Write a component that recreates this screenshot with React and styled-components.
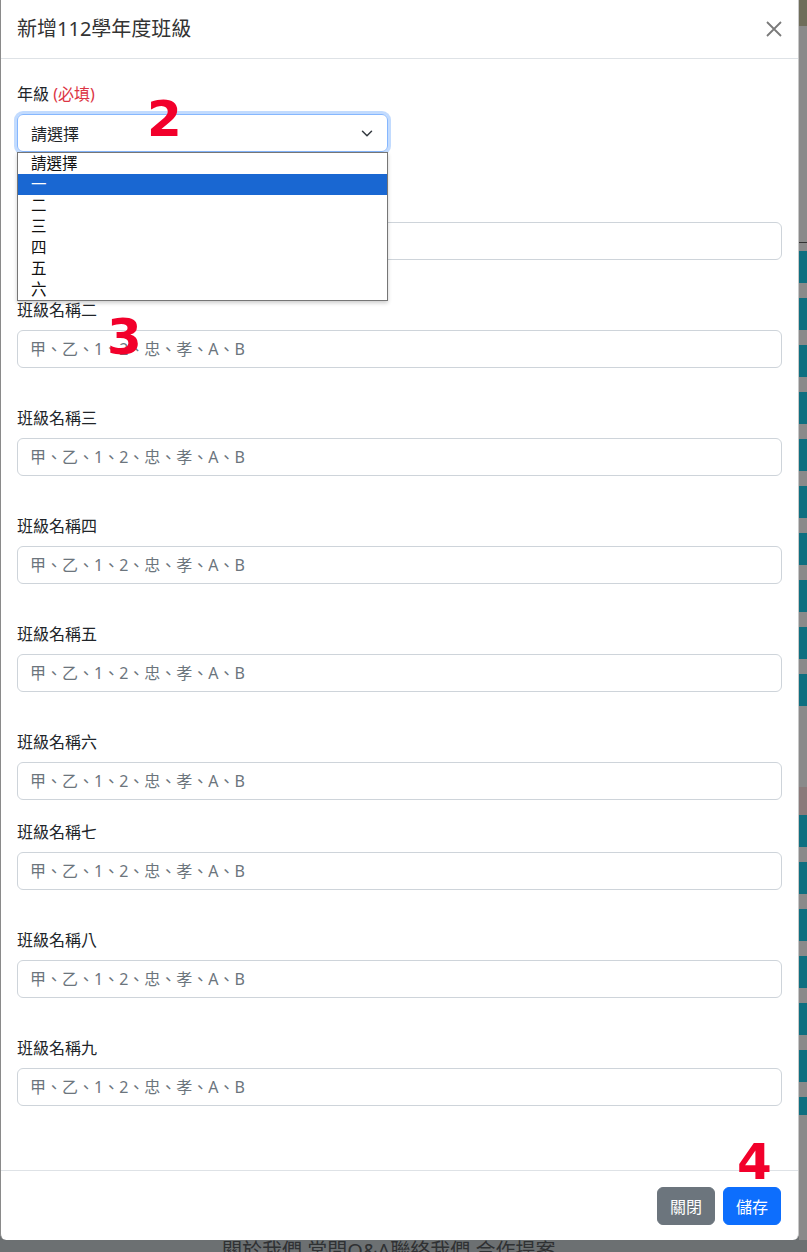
import React from 'react'
import styled, { createGlobalStyle } from 'styled-components'

const GlobalStyle = createGlobalStyle`
  body {
    margin: 0;
    background: #6c7072;
    font-family: "Noto Sans", "Noto Sans CJK TC", sans-serif;
  }
`

const Page = styled.div`
  width: 807px;
  height: 1252px;
  display: flex;
  flex-direction: column;
  overflow: hidden;
`

const TopRow = styled.div`
  display: flex;
  height: 1240px;
`

const Modal = styled.div`
  position: relative;
  width: 799px;
  box-sizing: border-box;
  background: #fff;
  border-left: 1px solid #8a8a8a;
  border-right: 1px solid #c8c8c8;
  border-radius: 0 0 6px 6px;
  display: flex;
  flex-direction: column;
  color: #212529;
`

const Header = styled.div`
  height: 59px;
  box-sizing: border-box;
  border-bottom: 1px solid #dee2e6;
  padding: 0 16px;
  display: flex;
  align-items: center;
  justify-content: space-between;
`

const Title = styled.h5`
  margin: 0;
  font-size: 20px;
  font-weight: 400;
  line-height: 30px;
  color: #333;
`

const CloseButton = styled.button`
  width: 16px;
  height: 16px;
  padding: 0;
  border: 0;
  background: none;
  display: flex;
  cursor: pointer;
`

const Body = styled.div`
  flex: 1;
  padding: 23px 16px 0;
`

const Group = styled.div`
  position: relative;
  margin-bottom: ${p => p.$gap ?? 38}px;
`

const Label = styled.label`
  display: block;
  font-size: 16px;
  line-height: 24px;
  margin-bottom: 8px;
`

const Required = styled.span`
  color: #dc3545;
`

const SelectBox = styled.div`
  width: 371px;
  height: 38px;
  box-sizing: border-box;
  border: 1px solid #86b7fe;
  border-radius: 6px;
  box-shadow: 0 0 0 3px rgba(13, 110, 253, 0.25);
  padding: 0 14px 0 13px;
  display: flex;
  align-items: center;
  justify-content: space-between;
  font-size: 16px;
`

const OptionList = styled.ul`
  position: absolute;
  top: 70px;
  left: 0;
  width: 371px;
  box-sizing: border-box;
  margin: 0;
  padding: 0;
  list-style: none;
  background: #fff;
  border: 1px solid #767676;
  box-shadow: 0 2px 4px rgba(0, 0, 0, 0.2);
  z-index: 5;
`

const Option = styled.li`
  height: 21px;
  line-height: 21px;
  padding-left: 13px;
  font-size: 15.5px;
  color: ${p => (p.$active ? '#fff' : '#111')};
  background: ${p => (p.$active ? '#1967d2' : 'transparent')};
`

const Input = styled.input`
  display: block;
  width: 100%;
  height: 38px;
  box-sizing: border-box;
  border: 1px solid #ced4da;
  border-radius: 6px;
  padding: 0 12px;
  font-family: inherit;
  font-size: 16px;
  color: #212529;
  &::placeholder {
    color: #6c757d;
  }
`

const Footer = styled.div`
  border-top: 1px solid #dee2e6;
  padding: 16px 17px 15px;
  display: flex;
  justify-content: flex-end;
  gap: 8px;
`

const Button = styled.button`
  height: 38px;
  padding: 0 12px;
  border: 1px solid ${p => p.$bg};
  border-radius: 6px;
  background: ${p => p.$bg};
  color: #fff;
  font-family: inherit;
  font-size: 16px;
`

const Mark = styled.span`
  position: absolute;
  left: ${p => p.$x}px;
  top: ${p => p.$y}px;
  font-family: "DejaVu Sans", sans-serif;
  font-weight: 700;
  font-size: 50px;
  line-height: 1;
  color: #f2002b;
  z-index: 6;
`

const Strip = styled.div`
  flex: 1;
  display: flex;
  flex-direction: column;
`

const StripPart = styled.div`
  height: ${p => p.$h}px;
  background: ${p =>
    p.$teal
      ? 'repeating-linear-gradient(to bottom, #0e6f80 0 32px, #8a8a8a 32px 47px)'
      : p.$c || '#8a8a8a'};
  border-bottom: ${p => (p.$line ? '1px solid #333' : '0')};
`

const SiteFooter = styled.div`
  height: 12px;
  overflow: hidden;
  padding-left: 222px;
  font-size: 20px;
  line-height: 20px;
  color: #2f3133;
  white-space: nowrap;
  & span {
    display: block;
    margin-top: 1px;
  }
`

const placeholder = '甲、乙、1、2、忠、孝、A、B'
const grades = ['請選擇', '一', '二', '三', '四', '五', '六']
const names = ['一', '二', '三', '四', '五', '六', '七', '八', '九']

const App = () => {
  return (
    <Page>
      <GlobalStyle />
      <TopRow>
        <Modal>
          <Header>
            <Title>新增112學年度班級</Title>
            <CloseButton aria-label="close">
              <svg width="16" height="16" viewBox="0 0 16 16">
                <path d="M1 1 15 15M15 1 1 15" stroke="#7a7a7a" strokeWidth="1.8" fill="none" />
              </svg>
            </CloseButton>
          </Header>
          <Body>
            <Group>
              <Label>年級 <Required>(必填)</Required></Label>
              <SelectBox>
                <span>請選擇</span>
                <svg width="12" height="9" viewBox="0 0 16 12">
                  <path d="m2 3 6 6 6-6" stroke="#343a40" strokeWidth="2" fill="none" strokeLinecap="round" strokeLinejoin="round" />
                </svg>
              </SelectBox>
              <OptionList>
                {grades.map((g, i) => (
                  <Option key={g} $active={i === 1}>{g}</Option>
                ))}
              </OptionList>
            </Group>
            {names.map((n, i) => (
              <Group key={n} $gap={i === 5 ? 20 : 38}>
                <Label>班級名稱{n}</Label>
                <Input placeholder={placeholder} />
              </Group>
            ))}
          </Body>
          <Footer>
            <Button $bg="#6c757d">關閉</Button>
            <Button $bg="#0d6efd">儲存</Button>
          </Footer>
          <Mark $x={146} $y={94}>2</Mark>
          <Mark $x={106} $y={312}>3</Mark>
          <Mark $x={736} $y={1137}>4</Mark>
        </Modal>
        <Strip>
          <StripPart $h={26} $c="#6f6d5a" />
          <StripPart $h={216} $line />
          <StripPart $h={8} />
          <StripPart $h={462} $teal />
          <StripPart $h={75} />
          <StripPart $h={28} $c="#8a7a7a" />
          <StripPart $h={300} $teal />
          <StripPart $h={125} />
        </Strip>
      </TopRow>
      <SiteFooter>
        <span>關於我們 常問Q&amp;A聯絡我們 合作提案</span>
      </SiteFooter>
    </Page>
  )
}

export default App
